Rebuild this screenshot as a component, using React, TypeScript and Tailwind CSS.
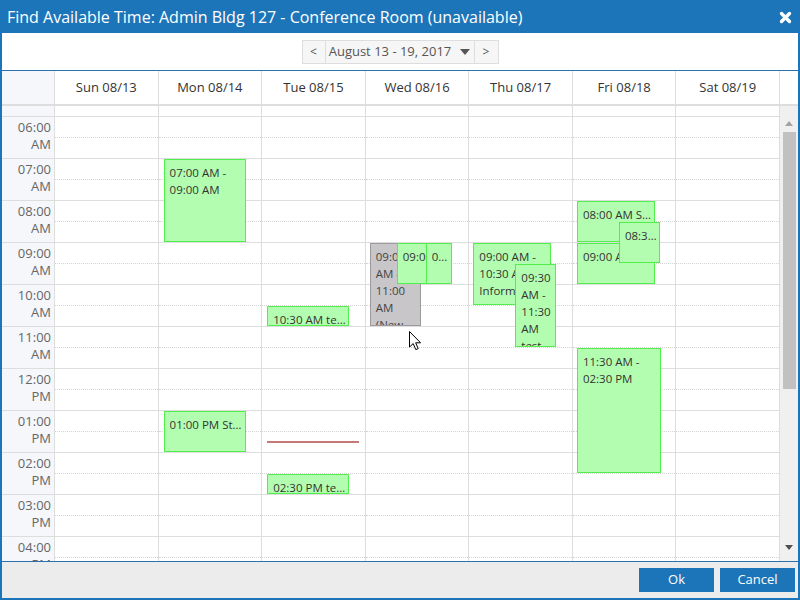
import React from 'react';

type Ev = {
  day: number;
  start: number;
  end: number;
  left: number;
  width: number;
  text: string;
  mode?: 'wrap' | 'clip' | 'ellipsis';
  gray?: boolean;
};

const days = ['Sun 08/13', 'Mon 08/14', 'Tue 08/15', 'Wed 08/16', 'Thu 08/17', 'Fri 08/18', 'Sat 08/19'];
const hours = ['06:00', '07:00', '08:00', '09:00', '10:00', '11:00', '12:00', '01:00', '02:00', '03:00', '04:00'];
const ampm = ['AM', 'AM', 'AM', 'AM', 'AM', 'AM', 'PM', 'PM', 'PM', 'PM', 'PM'];

// order matters: later ones sit on top
const events: Ev[] = [
  { day: 1, start: 7, end: 9, left: 5, width: 82, text: '07:00 AM - 09:00 AM', mode: 'wrap' },
  { day: 1, start: 13, end: 14, left: 5, width: 82, text: '01:00 PM Staff Meeting' },
  { day: 2, start: 10.5, end: 11, left: 5, width: 82, text: '10:30 AM test event' },
  { day: 2, start: 14.5, end: 15, left: 5, width: 82, text: '02:30 PM test event' },
  { day: 3, start: 9, end: 11, left: 4, width: 51, text: '09:00 AM - 11:00 AM (New Reservation)', mode: 'wrap', gray: true },
  { day: 3, start: 9, end: 10, left: 31, width: 30, text: '09:00 AM', mode: 'clip' },
  { day: 3, start: 9, end: 10, left: 60, width: 26, text: '09:00 AM' },
  { day: 4, start: 9, end: 10.5, left: 4, width: 78, text: '09:00 AM - 10:30 AM Information Technology', mode: 'wrap' },
  { day: 4, start: 9.5, end: 11.5, left: 46, width: 41, text: '09:30 AM - 11:30 AM test', mode: 'wrap' },
  { day: 5, start: 8, end: 9, left: 4, width: 78, text: '08:00 AM Staff Meeting' },
  { day: 5, start: 9, end: 10, left: 4, width: 78, text: '09:00 AM test' },
  { day: 5, start: 8.5, end: 9.5, left: 46, width: 41, text: '08:30 AM' },
  { day: 5, start: 11.5, end: 14.5, left: 4, width: 84, text: '11:30 AM - 02:30 PM', mode: 'wrap' },
];

const topOf = (t: number) => 11 + (t - 6) * 42;

function Event({ ev }: { ev: Ev }) {
  const style = {
    top: topOf(ev.start),
    left: ev.left,
    width: ev.width,
    height: (ev.end - ev.start) * 42 - 1,
  };
  const colors = ev.gray
    ? 'bg-[#c8c6c8] border-[#9c9a9c] text-[#444]'
    : 'bg-[#b3fdb0] border-[#52ee4c] text-[#333]';
  const mode = ev.mode ?? 'ellipsis';
  return (
    <div
      className={`absolute border overflow-hidden pl-[5px] pt-[4px] text-[11.5px] leading-[17px] ${colors}`}
      style={style}
    >
      {mode === 'wrap' && <div>{ev.text}</div>}
      {mode === 'clip' && <div className="whitespace-nowrap overflow-hidden">{ev.text}</div>}
      {mode === 'ellipsis' && <div className="truncate">{ev.text}</div>}
    </div>
  );
}

function Cursor() {
  return (
    <svg className="absolute left-[409px] top-[331px]" width="13" height="20" viewBox="0 0 13 20">
      <path
        d="M0.5 0.5 L0.5 16 L4.2 12.6 L6.8 18.6 L9.2 17.6 L6.7 11.8 L11.6 11.8 Z"
        fill="#fff"
        stroke="#000"
        strokeWidth="1"
        strokeLinejoin="round"
      />
    </svg>
  );
}

export default function App() {
  return (
    <div className="relative w-[800px] h-[600px] bg-[#1d75b9] flex flex-col px-[2px] pb-[2px] font-['Open_Sans',sans-serif]">
      <div className="h-[33px] flex items-center justify-between pl-[5px] pr-[6px] text-white text-[16px]">
        <span>Find Available Time: Admin Bldg 127 - Conference Room (unavailable)</span>
        <svg width="13" height="13" viewBox="0 0 13 13" className="mt-[1px]">
          <path d="M2.5 2.5 L10.5 10.5 M10.5 2.5 L2.5 10.5" stroke="#fff" strokeWidth="3.4" strokeLinecap="round" />
        </svg>
      </div>

      <div className="flex-1 min-h-0 bg-white flex flex-col">
        {/* toolbar */}
        <div className="h-[37px] flex items-center justify-center">
          <div className="flex h-[24px] text-[13px] text-[#555] bg-[#f6f6f6] border border-[#dddddd]">
            <button className="w-[23px] border-r border-[#dddddd] text-[12px]">&lt;</button>
            <button className="w-[149px] border-r border-[#dddddd] flex items-center justify-center gap-[9px]">
              <span>August 13 - 19, 2017</span>
              <span className="w-0 h-0 border-l-[5px] border-r-[5px] border-t-[6px] border-l-transparent border-r-transparent border-t-[#555] mt-[1px]" />
            </button>
            <button className="w-[23px] text-[12px]">&gt;</button>
          </div>
        </div>

        {/* calendar */}
        <div className="flex-1 min-h-0 flex flex-col border-t border-[#2b6fae]">
          <div className="h-[35px] flex border-b-2 border-[#dddddd] text-[13px] text-[#333]">
            <div className="w-[53px] bg-[#f5f7fb] border-r border-[#dddddd]" />
            {days.map(d => (
              <div key={d} className="flex-1 border-r border-[#dddddd] flex items-center justify-center">
                {d}
              </div>
            ))}
            <div className="w-[18px]" />
          </div>

          <div className="relative flex-1 min-h-0 overflow-hidden flex">
            <div className="w-[53px] bg-[#f5f7fb] border-r border-[#dddddd] text-[13px] text-[#666] leading-[17px]">
              <div className="h-[11px] border-b border-[#dddddd]" />
              {hours.map((h, i) => (
                <div key={h + i} className="h-[42px] border-b border-[#dddddd] text-right pr-[3px] pt-[2px]">
                  <div>{h}</div>
                  <div>{ampm[i]}</div>
                </div>
              ))}
            </div>

            {days.map((d, di) => (
              <div key={d} className="relative flex-1 border-r border-[#dddddd]">
                <div className="h-[11px] border-b border-[#dddddd]" />
                {hours.map((h, i) => (
                  <div key={h + i} className="h-[42px] border-b border-[#dddddd]">
                    <div className="h-[21px] border-b border-dotted border-[#d4d4d4]" />
                  </div>
                ))}
                {di === 2 && <div className="absolute left-[5px] top-[335px] w-[92px] h-[2px] bg-[#c47878]" />}
                {events.filter(e => e.day === di).map((e, k) => (
                  <Event key={k} ev={e} />
                ))}
              </div>
            ))}

            {/* scrollbar */}
            <div className="w-[18px] bg-[#f0f0f0] flex flex-col items-center">
              <div className="h-[26px] flex items-center justify-center pt-[8px]">
                <span className="w-0 h-0 border-l-[4px] border-r-[4px] border-b-[5px] border-l-transparent border-r-transparent border-b-[#a3a3a3]" />
              </div>
              <div className="w-[13px] h-[257px] bg-[#c1c1c1]" />
              <div className="flex-1" />
              <div className="h-[22px] flex items-start justify-center pt-[6px]">
                <span className="w-0 h-0 border-l-[4px] border-r-[4px] border-t-[5px] border-l-transparent border-r-transparent border-t-[#505050]" />
              </div>
            </div>
          </div>
        </div>

        {/* footer */}
        <div className="h-[37px] bg-[#ececec] border-t border-[#2b6fae] flex items-center justify-end gap-[6px] pr-[3px]">
          <button className="w-[75px] h-[24px] bg-[#1d75b9] text-white text-[13px]">Ok</button>
          <button className="w-[75px] h-[24px] bg-[#1d75b9] text-white text-[13px]">Cancel</button>
        </div>
      </div>

      <Cursor />
    </div>
  );
}
